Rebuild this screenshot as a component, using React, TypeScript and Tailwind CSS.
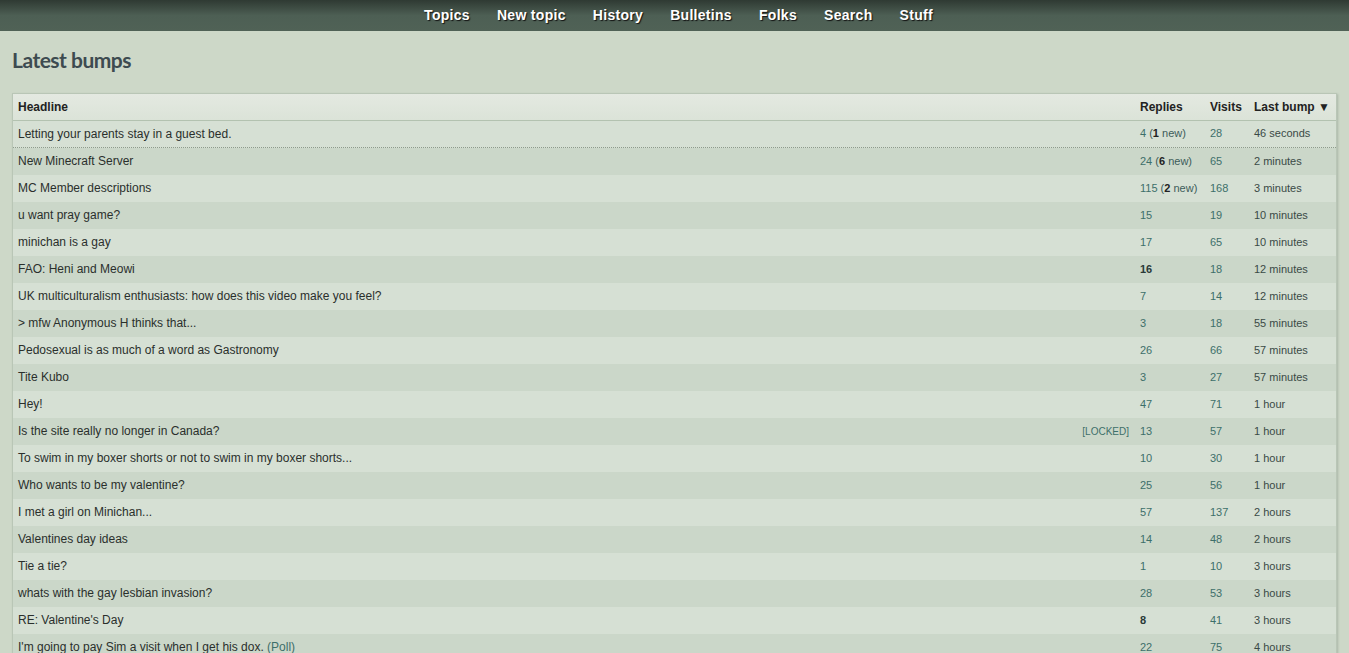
import React from 'react';

interface Row {
  title: string;
  replies: string;
  fresh?: string;
  visits: string;
  bump: string;
  locked?: boolean;
  poll?: boolean;
  bold?: boolean;
}

const rows: Row[] = [
  { title: 'Letting your parents stay in a guest bed.', replies: '4', fresh: '1', visits: '28', bump: '46 seconds' },
  { title: 'New Minecraft Server', replies: '24', fresh: '6', visits: '65', bump: '2 minutes' },
  { title: 'MC Member descriptions', replies: '115', fresh: '2', visits: '168', bump: '3 minutes' },
  { title: 'u want pray game?', replies: '15', visits: '19', bump: '10 minutes' },
  { title: 'minichan is a gay', replies: '17', visits: '65', bump: '10 minutes' },
  { title: 'FAO: Heni and Meowi', replies: '16', visits: '18', bump: '12 minutes', bold: true },
  { title: 'UK multiculturalism enthusiasts: how does this video make you feel?', replies: '7', visits: '14', bump: '12 minutes' },
  { title: '> mfw Anonymous H thinks that...', replies: '3', visits: '18', bump: '55 minutes' },
  { title: 'Pedosexual is as much of a word as Gastronomy', replies: '26', visits: '66', bump: '57 minutes' },
  { title: 'Tite Kubo', replies: '3', visits: '27', bump: '57 minutes' },
  { title: 'Hey!', replies: '47', visits: '71', bump: '1 hour' },
  { title: 'Is the site really no longer in Canada?', replies: '13', visits: '57', bump: '1 hour', locked: true },
  { title: 'To swim in my boxer shorts or not to swim in my boxer shorts...', replies: '10', visits: '30', bump: '1 hour' },
  { title: 'Who wants to be my valentine?', replies: '25', visits: '56', bump: '1 hour' },
  { title: 'I met a girl on Minichan...', replies: '57', visits: '137', bump: '2 hours' },
  { title: 'Valentines day ideas', replies: '14', visits: '48', bump: '2 hours' },
  { title: 'Tie a tie?', replies: '1', visits: '10', bump: '3 hours' },
  { title: 'whats with the gay lesbian invasion?', replies: '28', visits: '53', bump: '3 hours' },
  { title: "RE: Valentine's Day", replies: '8', visits: '41', bump: '3 hours', bold: true },
  { title: "I'm going to pay Sim a visit when I get his dox.", replies: '22', visits: '75', bump: '4 hours', poll: true },
];

const nav = ['Topics', 'New topic', 'History', 'Bulletins', 'Folks', 'Search', 'Stuff'];

export default function App() {
  return (
    <div className="min-h-screen bg-[#cdd8c8] text-[#2a2f2c]" style={{ fontFamily: '"Liberation Sans", Arial, sans-serif' }}>
      <div className="h-[31px] bg-gradient-to-b from-[#2f3a33] via-[#4d5f54] to-[#506256] flex justify-center items-center gap-[27px] pl-[8px]">
        {nav.map(n => (
          <span key={n} className="text-white font-bold text-[14px] tracking-[0.3px] [text-shadow:1px_1px_1px_#111]">{n}</span>
        ))}
      </div>
      <h1 className="mx-[12px] mt-[13px] mb-[17px] text-[21px] font-bold text-[#3d4b50] tracking-[-0.5px]" style={{ fontFamily: 'Lato, sans-serif' }}>Latest bumps</h1>
      <div className="mx-[12px] border border-[#b9c6b6] shadow-[1px_1px_2px_#aab6a8]">
        <div className="flex h-[27px] items-center bg-gradient-to-b from-[#e4e9e1] to-[#dbe3d8] border-b border-[#b3c2b0] text-[12px] font-bold text-[#222]">
          <div className="flex-1 pl-[5px]">Headline</div>
          <div className="w-[70px]">Replies</div>
          <div className="w-[44px]">Visits</div>
          <div className="w-[82px]">Last bump ▼</div>
        </div>
        {rows.map((r, i) => (
          <div key={i} className={`flex h-[27px] items-center text-[12px] ${i % 2 === 0 ? 'bg-[#d6e0d4]' : 'bg-[#cbd7c9]'} ${i === 0 ? 'border-b border-dotted border-[#8e9b8c]' : ''}`}>
            <div className="flex-1 pl-[5px] flex items-center">
              <span className="flex-1">
                {r.title}
                {r.poll && <span className="text-[#3d6f6a]"> (Poll)</span>}
              </span>
              {r.locked && <span className="text-[10px] text-[#3d6f6a] pr-[11px]">[LOCKED]</span>}
            </div>
            <div className={`w-[70px] text-[11px] ${r.bold ? 'font-bold text-[#2a3a38]' : 'text-[#3d6f6a]'}`}>
              {r.replies}
              {r.fresh && <span className="text-[#3d5c5a]"> (<b className="text-[#222]">{r.fresh}</b> new)</span>}
            </div>
            <div className="w-[44px] text-[11px] text-[#3d6f6a]">{r.visits}</div>
            <div className="w-[82px] text-[11px] text-[#3a4a46]">{r.bump}</div>
          </div>
        ))}
      </div>
    </div>
  );
}
